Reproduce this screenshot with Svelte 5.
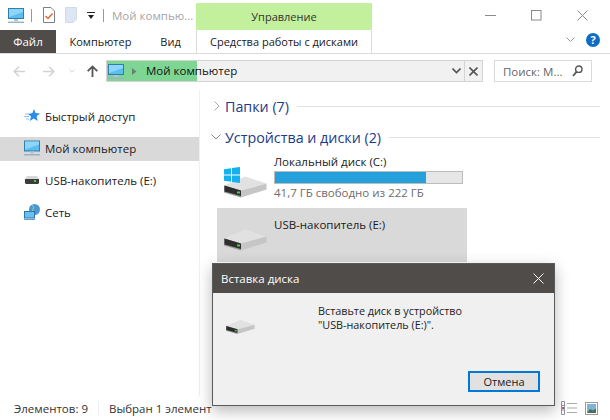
<script>
  const tabs = ['Компьютер', 'Вид'];

  const navItems = [
    { label: 'Быстрый доступ', icon: 'star' },
    { label: 'Мой компьютер', icon: 'pc', selected: true },
    { label: 'USB-накопитель (E:)', icon: 'usb' },
    { label: 'Сеть', icon: 'net' }
  ];
</script>

{#snippet monitor(w, h)}
  <svg width={w} height={h} viewBox="0 0 16 15">
    <rect x="0.5" y="0.5" width="15" height="10" fill="#5cbdf2" stroke="#2f7eab" />
    <path d="M1 1h14v3L1 9z" fill="#8ed6f8" />
    <rect x="6" y="11" width="4" height="2" fill="#b5c6d2" />
    <rect x="0" y="13.500" width="16" height="1.500" fill="#9db3c3" />
  </svg>
{/snippet}

{#snippet drive(w, h)}
  <svg width={w} height={h} viewBox="0 0 43 22">
    <path d="M0 9.500L21 0.500 42.500 7.500 17 14.500z" fill="#e1e1e1" />
    <path d="M17 14.500L42.500 7.500V13.500L17 21.500z" fill="#c6c6c6" />
    <path d="M0 9.500L17 14.500V21.500L0 16.500z" fill="#9a9a9a" />
    <path d="M0.500 9.500L17 14.500V20L0.500 15.500z" fill="#2e2e2e" />
    <rect x="13" y="15.500" width="3" height="2" fill="#45d04a" />
  </svg>
{/snippet}

<div class="window">
  <div class="titlebar">
    <div class="quick">
      <span class="qa pc">{@render monitor(16, 15)}</span>
      <span class="vsep"></span>
      <svg class="qa" width="12" height="16" viewBox="0 0 12 16">
        <path d="M0.500 0.500h7.500l3.500 3.500v11.500h-11z" fill="#fff" stroke="#7f7f7f" />
        <path d="M2.500 9l2.500 2.500 4.500-5" fill="none" stroke="#e2683a" stroke-width="1.500" />
      </svg>
      <svg class="qa" width="12" height="16" viewBox="0 0 12 16">
        <path d="M0.500 0.500h11v11.500l-3.500 3.500h-7.500z" fill="#dde6f3" stroke="#cfdbec" />
      </svg>
      <svg class="qa" width="8" height="7" viewBox="0 0 8 7">
        <rect x="0" y="0" width="8" height="1" fill="#222" />
        <path d="M1 3h6L4 7z" fill="#222" />
      </svg>
      <span class="vsep"></span>
      <span class="doc-title">Мой компью...</span>
    </div>
    <div class="tool-tab">Управление</div>
    <div class="caption">
      <svg width="11" height="11" viewBox="0 0 11 11"><rect y="5" width="11" height="1" fill="#8a8a8a" /></svg>
      <svg width="11" height="11" viewBox="0 0 11 11"><rect x="0.500" y="0.500" width="9.500" height="9.500" fill="none" stroke="#8a8a8a" /></svg>
      <svg width="11" height="11" viewBox="0 0 11 11"><path d="M0.500 0.500l10 10M10.500 0.500l-10 10" stroke="#8a8a8a" fill="none" /></svg>
    </div>
  </div>

  <div class="ribbon">
    <div class="file-tab">Файл</div>
    {#each tabs as tab}
      <div class="tab">{tab}</div>
    {/each}
    <div class="tab tool">Средства работы с дисками</div>
    <div class="ribbon-right">
      <svg width="9" height="5" viewBox="0 0 9 5"><path d="M0.500 0.500l4 4 4-4" fill="none" stroke="#999" /></svg>
      <span class="help">?</span>
    </div>
  </div>

  <div class="navbar">
    <div class="arrows">
      <svg width="12" height="11" viewBox="0 0 12 11"><path d="M12 5.500H1.500M6 0.800L1.200 5.500 6 10.200" fill="none" stroke="#d2d2d2" stroke-width="1.500" /></svg>
      <svg width="12" height="11" viewBox="0 0 12 11"><path d="M0 5.500h10.500M6 0.800l4.800 4.700L6 10.200" fill="none" stroke="#d2d2d2" stroke-width="1.500" /></svg>
      <svg width="6" height="4" viewBox="0 0 6 4"><path d="M0.300 0.500l2.700 2.700 2.700-2.700" fill="none" stroke="#d2d2d2" /></svg>
      <svg width="11" height="12" viewBox="0 0 11 12"><path d="M5.500 12V1.500M0.700 6.200l4.800-4.800 4.800 4.800" fill="none" stroke="#555" stroke-width="1.800" /></svg>
    </div>
    <div class="address">
      <div class="progress"></div>
      <div class="crumbs">
        <span class="crumb-icon">{@render monitor(16, 15)}</span>
        <svg width="5" height="7" viewBox="0 0 5 7"><path d="M0 0l4.500 3.500L0 7z" fill="#6f7f6f" /></svg>
        <span class="crumb-text">Мой компьютер</span>
      </div>
      <svg class="addr-chev" width="9" height="6" viewBox="0 0 9 6"><path d="M0.500 0.500l4 4 4-4" fill="none" stroke="#555" stroke-width="1.600" /></svg>
      <span class="addr-x">
        <svg width="9" height="9" viewBox="0 0 9 9"><path d="M0.500 0.500l8 8M8.500 0.500l-8 8" stroke="#555" stroke-width="1.600" /></svg>
      </span>
    </div>
    <div class="search">
      <span>Поиск: М...</span>
      <svg width="11" height="12" viewBox="0 0 11 12">
        <circle cx="6.800" cy="4.200" r="3.200" fill="none" stroke="#555" stroke-width="1.400" />
        <path d="M4.500 6.800L1 11" stroke="#555" stroke-width="1.800" />
      </svg>
    </div>
  </div>

  <div class="main">
    <nav class="sidebar">
      {#each navItems as item}
        <div class="nav-item" class:selected={item.selected}>
          <span class="nav-icon">
            {#if item.icon === 'star'}
              <svg width="16" height="14" viewBox="0 0 16 14">
                <path d="M10 0l1.600 4 4.400 0.400-3.400 2.900 1.100 4.700-3.900-2.500-4 2.500 1.200-4.600L4 5l4.400-0.900z" fill="#2b8fe8" />
                <path d="M1 5h4M0 7.500h5M2 10h3" stroke="#8fc4f2" />
              </svg>
            {:else if item.icon === 'pc'}
              {@render monitor(16, 16)}
            {:else if item.icon === 'usb'}
              <svg class="usb" width="14" height="8" viewBox="0 0 14 8">
                <path d="M2 0h10l2 3H0z" fill="#d8d8d8" />
                <path d="M0 3h14v3.500q0 1.500-1.500 1.500h-11Q0 8 0 6.500z" fill="#3d3d3d" />
                <rect x="9" y="4" width="2" height="2" fill="#5fc54f" />
              </svg>
            {:else}
              <svg width="16" height="16" viewBox="0 0 16 16">
                <circle cx="10.500" cy="5.500" r="5.500" fill="#4a97d8" />
                <path d="M8 1q3 2 1 4t2 5" stroke="#9dcaa0" fill="none" />
                <rect x="0.500" y="7.500" width="10" height="6.500" fill="#6cc0ef" stroke="#2b78ad" />
                <rect x="0" y="15" width="11" height="1" fill="#6f99b8" />
              </svg>
            {/if}
          </span>
          {item.label}
        </div>
      {/each}
    </nav>

    <section class="content">
      <div class="group">
        <svg class="chev" width="6" height="10" viewBox="0 0 6 10"><path d="M0.500 0.500l4.500 4.500-4.500 4.500" fill="none" stroke="#a6a6a6" /></svg>
        <span class="group-name">Папки (7)</span>
        <span class="rule"></span>
      </div>
      <div class="group second">
        <svg class="chev down" width="10" height="6" viewBox="0 0 10 6"><path d="M0.500 0.500l4.500 4.500 4.500-4.500" fill="none" stroke="#8a8a8a" /></svg>
        <span class="group-name">Устройства и диски (2)</span>
        <span class="rule"></span>
      </div>

      <div class="drive">
        <div class="drive-icon">
          <svg class="win" width="16" height="16" viewBox="0 0 16 16">
            <path d="M0 2.300l7-1V7.500H0zM8 1.100L16 0v7.500H8zM0 8.500h7v6.200l-7-1zM8 8.500h8V16l-8-1.100z" fill="#13b1ee" />
          </svg>
          {@render drive(43, 22)}
        </div>
        <div class="drive-info">
          <div class="drive-name">Локальный диск (C:)</div>
          <div class="bar"><div class="bar-fill" style="width: 81%"></div></div>
          <div class="free">41,7 ГБ свободно из 222 ГБ</div>
        </div>
      </div>

      <div class="drive selected">
        <div class="drive-icon">{@render drive(43, 22)}</div>
        <div class="drive-info">
          <div class="drive-name">USB-накопитель (E:)</div>
        </div>
      </div>
    </section>
  </div>

  <footer class="status">
    <span>Элементов: 9</span>
    <span class="status-sep"></span>
    <span>Выбран 1 элемент</span>
    <span class="status-views">
      <svg width="16" height="14" viewBox="0 0 16 14">
        <path d="M0.500 0.500h3v13h-3zM0.500 4.500h3M0.500 9h3" fill="none" stroke="#8f97a8" />
        <rect x="1" y="6" width="2" height="2" fill="#d9534f" />
        <path d="M6 2.500h10M6 7h10M6 11.500h10" stroke="#a9a9a9" />
      </svg>
      <svg width="13" height="13" viewBox="0 0 13 13">
        <rect x="0.500" y="0.500" width="12" height="12" fill="#fff" stroke="#9a9a9a" />
        <rect x="2" y="2" width="9" height="9" fill="#7fb2d8" />
        <path d="M2 11l3-4 3 1.500 3-2V11z" fill="#4d6b55" />
      </svg>
    </span>
  </footer>

  <div class="dialog" role="dialog">
    <div class="dialog-title">
      <span>Вставка диска</span>
      <svg width="11" height="11" viewBox="0 0 11 11"><path d="M0.500 0.500l10 10M10.500 0.500l-10 10" stroke="#fff" fill="none" /></svg>
    </div>
    <div class="dialog-body">
      <div class="dialog-row">
        <span class="dialog-icon">{@render drive(29, 16)}</span>
        <p>Вставьте диск в устройство<br />"USB-накопитель (E:)".</p>
      </div>
      <div class="dialog-actions">
        <button>Отмена</button>
      </div>
    </div>
  </div>
</div>

<style>
  :global(body) {
    margin: 0;
    background: #fff;
  }

  .window {
    position: relative;
    width: 610px;
    height: 420px;
    overflow: hidden;
    display: flex;
    flex-direction: column;
    font-family: "Open Sans", "Noto Sans", sans-serif;
    font-size: 11.500px;
    color: #1a1a1a;
    background: #fff;
  }

  svg {
    display: block;
    flex: none;
  }

  .titlebar {
    display: flex;
    height: 30px;
    flex: none;
  }

  .quick {
    width: 196px;
    display: flex;
    align-items: center;
    padding-left: 8px;
    box-sizing: border-box;
  }

  .qa.pc {
    display: block;
  }

  .vsep {
    width: 1px;
    height: 13px;
    background: #9a9a9a;
    margin: 0 11px 0 7px;
  }

  .quick svg.qa + svg.qa {
    margin-left: 10px;
  }

  .quick svg.qa + .vsep {
    margin-left: 8px;
    margin-right: 8px;
  }

  .doc-title {
    color: #a6a6a6;
    white-space: nowrap;
  }

  .tool-tab {
    width: 176px;
    margin-top: 3px;
    background: #c3f09c;
    display: flex;
    align-items: center;
    justify-content: center;
    color: #333;
    font-size: 11px;
  }

  .caption {
    flex: 1;
    display: flex;
    align-items: center;
    gap: 35px;
    padding-left: 113px;
  }

  .ribbon {
    height: 24px;
    box-sizing: border-box;
    flex: none;
    display: flex;
    align-items: stretch;
    border-bottom: 1px solid #dadbdc;
  }

  .file-tab {
    width: 56px;
    background: #4f4c4a;
    color: #fff;
    display: flex;
    align-items: center;
    justify-content: center;
  }

  .tab {
    display: flex;
    align-items: center;
    justify-content: center;
    width: 89px;
    font-size: 11px;
  }

  .tab + .tab {
    width: 51px;
  }

  .tab.tool {
    width: 176px;
    border-left: 1px solid #dadbdc;
    border-right: 1px solid #dadbdc;
    box-sizing: border-box;
  }

  .ribbon-right {
    flex: 1;
    display: flex;
    align-items: center;
    justify-content: flex-end;
    gap: 11px;
    padding-right: 10px;
    padding-bottom: 4px;
  }

  .help {
    width: 14px;
    height: 14px;
    border-radius: 50%;
    background: #0f6cc4;
    color: #fff;
    font-weight: 700;
    font-size: 11px;
    line-height: 14px;
    text-align: center;
  }

  .navbar {
    height: 36px;
    flex: none;
    display: flex;
    align-items: center;
    padding-bottom: 2px;
    box-sizing: border-box;
  }

  .arrows {
    width: 106px;
    box-sizing: border-box;
    padding-left: 13px;
    display: flex;
    align-items: center;
  }

  .arrows svg:nth-child(2) {
    margin-left: 18px;
  }

  .arrows svg:nth-child(3) {
    margin-left: 14px;
  }

  .arrows svg:nth-child(4) {
    margin-left: 12px;
  }

  .address {
    position: relative;
    width: 377px;
    height: 22px;
    box-sizing: border-box;
    border: 1px solid #d4d4d4;
    background: #f1f1f1;
    display: flex;
    align-items: center;
  }

  .progress {
    position: absolute;
    left: 0;
    top: 0;
    bottom: 0;
    width: 90px;
    background: #7ed694;
  }

  .crumbs {
    position: relative;
    flex: 1;
    display: flex;
    align-items: center;
    padding-left: 1px;
  }

  .crumb-icon {
    margin-right: 8px;
  }

  .crumb-text {
    margin-left: 9px;
    padding-bottom: 2px;
    color: #111;
  }

  .addr-chev {
    margin-right: 1px;
  }

  .addr-x {
    width: 17px;
    height: 20px;
    margin-left: 2px;
    border-left: 1px solid #d4d4d4;
    display: flex;
    align-items: center;
    justify-content: center;
  }

  .search {
    margin-left: 11px;
    width: 98px;
    height: 22px;
    box-sizing: border-box;
    border: 1px solid #d9d9d9;
    display: flex;
    align-items: center;
    justify-content: space-between;
    padding: 0 8px;
    color: #666;
  }

  .main {
    flex: 1;
    min-height: 0;
    display: flex;
  }

  .sidebar {
    width: 200px;
    flex: none;
    border-right: 1px solid #f0f0f0;
    padding-top: 15px;
    display: flex;
    flex-direction: column;
    gap: 8px;
    box-sizing: border-box;
  }

  .nav-item {
    height: 24px;
    box-sizing: border-box;
    padding: 0 0 2px 24px;
    display: flex;
    align-items: center;
  }

  .nav-item.selected {
    background: #d9d9d9;
  }

  .nav-icon {
    width: 21px;
    display: flex;
    justify-content: flex-start;
    flex: none;
  }

  .usb {
    margin-left: 1px;
  }

  .content {
    flex: 1;
    padding: 5px 0 0 13px;
    min-width: 0;
  }

  .group {
    height: 22px;
    display: flex;
    align-items: center;
    padding-right: 10px;
  }

  .group.second {
    margin-top: 9px;
  }

  .chev {
    margin: 0 5px 0 1px;
  }

  .chev.down {
    margin: 0 4px 0 -2px;
  }

  .group-name {
    font-size: 14.300px;
    color: #1e3a8a;
    white-space: nowrap;
  }

  .rule {
    flex: 1;
    height: 1px;
    background: #e2e2e2;
    margin-left: 8px;
  }

  .drive {
    margin: 6px 0 0 4px;
    width: 250px;
    display: flex;
    height: 52px;
  }

  .drive.selected {
    background: #d9d9d9;
    height: 54px;
    margin-top: 2px;
  }

  .drive-icon {
    width: 56px;
    flex: none;
    display: flex;
    flex-direction: column;
    justify-content: flex-end;
    padding: 0 0 8px 7px;
    box-sizing: border-box;
    position: relative;
  }

  .win {
    position: absolute;
    left: 7px;
    top: 13px;
  }

  .drive.selected .drive-icon {
    padding-bottom: 11px;
  }

  .drive-info {
    flex: 1;
    padding-left: 1px;
  }

  .drive-name {
    line-height: 16px;
  }

  .drive.selected .drive-name {
    margin-top: 9px;
  }

  .bar {
    width: 189px;
    height: 13px;
    box-sizing: border-box;
    border: 1px solid #bcbcbc;
    background: #e6e6e6;
    margin-top: 1px;
  }

  .bar-fill {
    height: 100%;
    background: #26a0da;
  }

  .free {
    color: #6d6d6d;
    margin-top: 1px;
    line-height: 16px;
  }

  .status {
    height: 24px;
    flex: none;
    display: flex;
    align-items: center;
    padding: 0 12px 0 14px;
    color: #333;
  }

  .status-sep {
    width: 1px;
    height: 14px;
    background: #eee;
    margin: 0 10px;
  }

  .status-views {
    margin-left: auto;
    display: flex;
    gap: 8px;
    align-items: center;
  }

  .dialog {
    position: absolute;
    left: 212px;
    top: 263px;
    width: 343px;
    height: 143px;
    box-sizing: border-box;
    border: 1px solid #5a5a5a;
    background: #f0f0f0;
    box-shadow: 0 5px 14px rgba(0, 0, 0, 0.28);
    display: flex;
    flex-direction: column;
  }

  .dialog-title {
    height: 29px;
    flex: none;
    background: #4f4c4a;
    color: #fff;
    display: flex;
    align-items: center;
    justify-content: space-between;
    padding: 0 10px 0 8px;
  }

  .dialog-body {
    flex: 1;
    display: flex;
    flex-direction: column;
    justify-content: space-between;
    padding: 11px 14px 13px 13px;
  }

  .dialog-row {
    display: flex;
    align-items: flex-start;
  }

  .dialog-icon {
    width: 92px;
    margin-top: 15px;
  }

  p {
    margin: 0;
    line-height: 14px;
    font-size: 10.800px;
    color: #222;
  }

  .dialog-actions {
    display: flex;
    justify-content: flex-end;
  }

  button {
    width: 72px;
    height: 21px;
    box-sizing: border-box;
    border: 2px solid #0078d7;
    background: #e1e1e1;
    font: inherit;
    font-size: 11px;
    color: #1a1a1a;
    padding: 0;
  }
</style>
